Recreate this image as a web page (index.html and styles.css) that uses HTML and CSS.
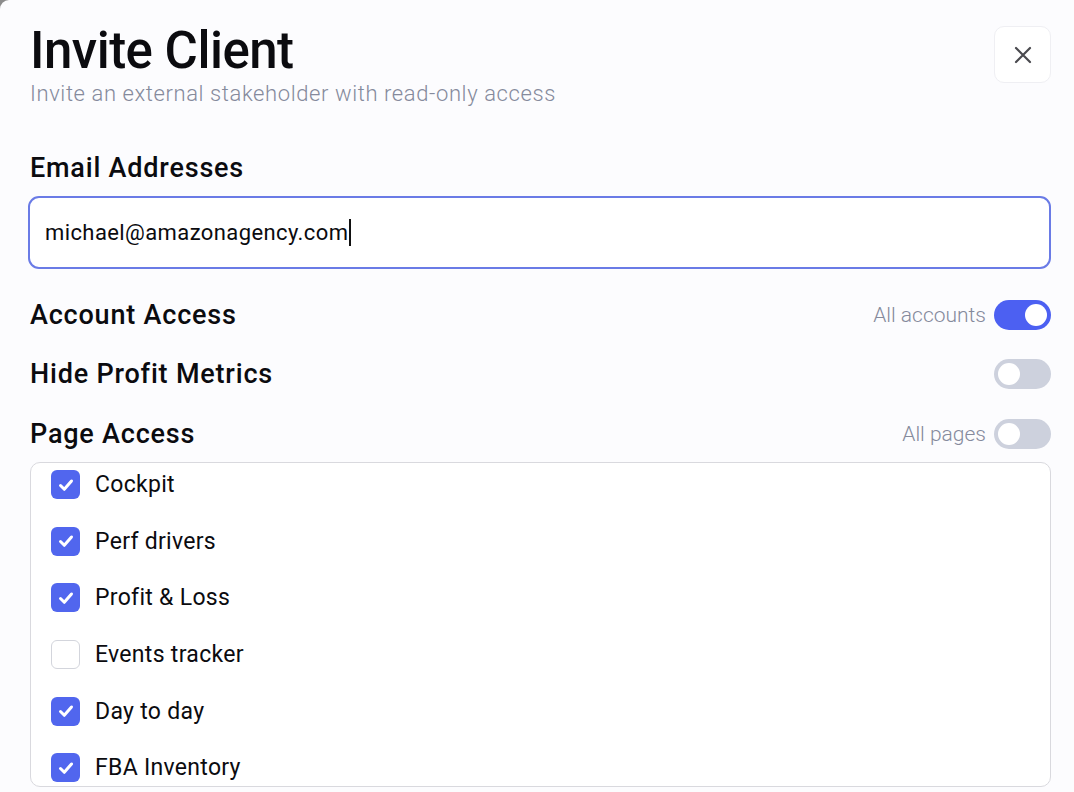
FILE: index.html
```html
<!DOCTYPE html>
<html lang="en">

<head>
    <title>Invite Client</title>
    <link rel="stylesheet" href="styles.css">
</head>

<body>
    <div class="modal">
        <div class="antet">
            <div>
                <h1 class="titlu">Invite Client</h1>
                <p class="subtitlu">Invite an external stakeholder with read-only access</p>
            </div>
            <button class="inchide" type="button">
                <svg width="22" height="22" viewBox="0 0 22 22"><path d="M4 4L18 18M18 4L4 18" stroke="#4a4a4f" stroke-width="2.2" stroke-linecap="round"/></svg>
            </button>
        </div>

        <label class="eticheta" for="email">Email Addresses</label>
        <div class="camp">
            <span class="valoare">michael@amazonagency.com</span><span class="cursor"></span>
        </div>

        <div class="setari">
            <div class="rand">
                <span class="eticheta">Account Access</span>
                <div class="dreapta">
                    <span class="nota">All accounts</span>
                    <span class="comutator pornit"><span class="buton"></span></span>
                </div>
            </div>
            <div class="rand">
                <span class="eticheta">Hide Profit Metrics</span>
                <div class="dreapta">
                    <span class="comutator"><span class="buton"></span></span>
                </div>
            </div>
            <div class="rand">
                <span class="eticheta">Page Access</span>
                <div class="dreapta">
                    <span class="nota">All pages</span>
                    <span class="comutator"><span class="buton"></span></span>
                </div>
            </div>
        </div>

        <div class="pagini">
            <div class="lista">
                <div class="pagina"><span class="bifa activa"><svg width="20" height="20" viewBox="0 0 20 20"><path d="M4.5 10.5L8.3 14.3L15.5 6" fill="none" stroke="#fff" stroke-width="3" stroke-linecap="round" stroke-linejoin="round"/></svg></span>Cockpit</div>
                <div class="pagina"><span class="bifa activa"><svg width="20" height="20" viewBox="0 0 20 20"><path d="M4.5 10.5L8.3 14.3L15.5 6" fill="none" stroke="#fff" stroke-width="3" stroke-linecap="round" stroke-linejoin="round"/></svg></span>Perf drivers</div>
                <div class="pagina"><span class="bifa activa"><svg width="20" height="20" viewBox="0 0 20 20"><path d="M4.5 10.5L8.3 14.3L15.5 6" fill="none" stroke="#fff" stroke-width="3" stroke-linecap="round" stroke-linejoin="round"/></svg></span>Profit &amp; Loss</div>
                <div class="pagina"><span class="bifa"></span>Events tracker</div>
                <div class="pagina"><span class="bifa activa"><svg width="20" height="20" viewBox="0 0 20 20"><path d="M4.5 10.5L8.3 14.3L15.5 6" fill="none" stroke="#fff" stroke-width="3" stroke-linecap="round" stroke-linejoin="round"/></svg></span>Day to day</div>
                <div class="pagina"><span class="bifa activa"><svg width="20" height="20" viewBox="0 0 20 20"><path d="M4.5 10.5L8.3 14.3L15.5 6" fill="none" stroke="#fff" stroke-width="3" stroke-linecap="round" stroke-linejoin="round"/></svg></span>FBA Inventory</div>
            </div>
        </div>
    </div>
</body>

</html>
```

FILE: styles.css
```css
html, body {
    margin: 0;
    height: 100%;
    background-color: #8c8c8c;
    font-family: Roboto, "Liberation Sans", sans-serif;
    color: #0b0b0f;
}

.modal {
    box-sizing: border-box;
    height: 100%;
    background-color: #fcfcfe;
    border-radius: 9px 0 0 0;
    padding: 26px 23px 0 30px;
    overflow: hidden;
}

.antet {
    display: flex;
    justify-content: space-between;
    align-items: flex-start;
}

.titlu {
    margin: 0;
    font-size: 51px;
    font-weight: 500;
    line-height: 50px;
    letter-spacing: -0.5px;
}

.subtitlu {
    margin: 5px 0 0 0;
    font-size: 22px;
    font-weight: 300;
    line-height: 26px;
    letter-spacing: 0.6px;
    color: #858a9c;
}

.inchide {
    width: 57px;
    height: 57px;
    border: 1px solid #efeff3;
    border-radius: 10px;
    background-color: #fff;
    display: flex;
    align-items: center;
    justify-content: center;
    padding: 0;
}

.eticheta {
    display: block;
    font-size: 27px;
    font-weight: 500;
    line-height: 32px;
    letter-spacing: 0.8px;
}

label.eticheta {
    margin-top: 45px;
}

.camp {
    box-sizing: border-box;
    height: 73px;
    margin: 12px 0 0 -2px;
    border: 2px solid #6a7be6;
    border-radius: 11px;
    background-color: #fff;
    display: flex;
    align-items: center;
    padding-left: 15px;
}

.valoare {
    font-size: 22px;
    line-height: 26px;
    letter-spacing: 0.4px;
}

.cursor {
    width: 2px;
    height: 27px;
    background-color: #111;
    margin-left: 1px;
}

.setari {
    margin-top: 16px;
}

.rand {
    display: flex;
    justify-content: space-between;
    align-items: center;
    height: 59.5px;
}

.dreapta {
    display: flex;
    align-items: center;
    gap: 8px;
}

.nota {
    font-size: 21px;
    font-weight: 300;
    color: #858a9c;
}

.comutator {
    box-sizing: border-box;
    width: 57px;
    height: 30px;
    border-radius: 15px;
    background-color: #cdd1dd;
    padding: 4px;
    display: flex;
}

.comutator .buton {
    width: 22px;
    height: 22px;
    border-radius: 50%;
    background-color: #fff;
}

.comutator.pornit {
    background-color: #4c60f2;
    justify-content: flex-end;
}

.pagini {
    height: 323px;
    margin-top: -2px;
    border: 1px solid #d9d9de;
    border-radius: 10px;
    background-color: #fff;
    overflow: hidden;
}

.lista {
    margin-top: -6px;
    padding-left: 20px;
}

.pagina {
    display: flex;
    align-items: center;
    height: 56.6px;
    font-size: 23px;
    letter-spacing: 0.3px;
}

.bifa {
    box-sizing: border-box;
    width: 29px;
    height: 29px;
    border-radius: 6px;
    border: 1px solid #d3d5dc;
    background-color: #fff;
    margin-right: 15px;
    display: flex;
    align-items: center;
    justify-content: center;
}

.bifa.activa {
    border: none;
    background-color: #5166ee;
}
```
